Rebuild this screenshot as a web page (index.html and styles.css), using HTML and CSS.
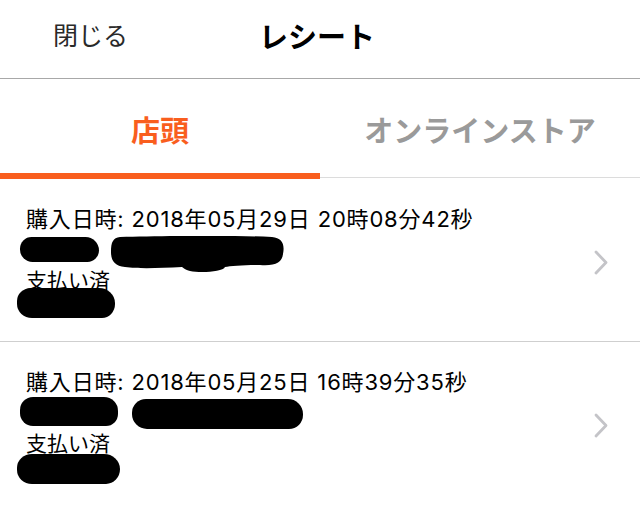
FILE: index.html
```html
<!DOCTYPE html>
<html lang="ja">
<head>
<meta charset="utf-8">
<title>レシート</title>
<link rel="stylesheet" href="styles.css">
</head>
<body>
<div class="app">
  <header class="nav">
    <div class="nav-left"><span class="close">閉じる</span></div>
    <h1 class="title">レシート</h1>
    <div class="nav-right"></div>
  </header>
  <nav class="tabs">
    <div class="tab active">店頭</div>
    <div class="tab">オンラインストア</div>
  </nav>
  <ul class="list">
    <li class="row row-1">
      <div class="content">
        <div class="line text">購入日時: 2018年05月29日 20時08分42秒</div>
        <div class="line blobs b2">
          <span class="blob r1a"></span>
          <svg class="r1b" width="175" height="37" viewBox="0 0 175 37"><path d="M10 1 C50 0 120 -1 162 1 C172 2 175 8 173 18 C172 27 165 30 150 29 C135 29 120 30 115 31 C113 36 90 37 80 35 C75 34 74 32 72 31 C50 32 30 33 15 31 C5 30 1 25 1 16 C1 6 3 2 10 1 Z" fill="#000"/></svg>
        </div>
        <div class="line text short">支払い済</div>
        <div class="line blobs b4">
          <span class="blob r1c"></span>
        </div>
      </div>
      <svg class="chev" width="14" height="25" viewBox="0 0 14 25"><polyline points="2,2 12,12.5 2,23" fill="none" stroke="#c4c4c8" stroke-width="2.8" stroke-linecap="round" stroke-linejoin="round"/></svg>
    </li>
    <li class="row row-2">
      <div class="content">
        <div class="line text">購入日時: 2018年05月25日 16時39分35秒</div>
        <div class="line blobs b2">
          <span class="blob r2a"></span>
          <span class="blob r2b"></span>
        </div>
        <div class="line text short">支払い済</div>
        <div class="line blobs b4">
          <span class="blob r2c"></span>
        </div>
      </div>
      <svg class="chev" width="14" height="25" viewBox="0 0 14 25"><polyline points="2,2 12,12.5 2,23" fill="none" stroke="#c4c4c8" stroke-width="2.8" stroke-linecap="round" stroke-linejoin="round"/></svg>
    </li>
  </ul>
</div>
</body>
</html>
```
FILE: styles.css
```css
html, body {
  margin: 0;
  padding: 0;
  background: #fff;
}
body {
  font-family: "Noto Sans CJK JP", "Noto Sans", sans-serif;
  color: #000;
}
.app {
  width: 640px;
  height: 506px;
  overflow: hidden;
}
.nav {
  height: 78px;
  border-bottom: 1px solid #a8a8a8;
  display: grid;
  grid-template-columns: 1fr auto 1fr;
  align-items: center;
}
.nav-left {
  padding-left: 53px;
}
.close {
  font-size: 25px;
  line-height: 30px;
  color: #2a2a2a;
  display: block;
  margin-top: -11px;
}
.title {
  margin: -9px 0 0 -6px;
  font-size: 29px;
  line-height: 34px;
  font-weight: 700;
  color: #000;
}
.tabs {
  display: flex;
  height: 100px;
}
.tab {
  flex: 1;
  text-align: center;
  font-size: 29px;
  line-height: 30px;
  font-weight: 700;
  color: #9a9a9a;
  padding-top: 35px;
  box-sizing: border-box;
  border-bottom: 1px solid #dcdcdc;
  margin-bottom: 1px;
}
.tab.active {
  color: #f95e1e;
  border-bottom: 6px solid #f95e1e;
  margin-bottom: 0;
}
.list {
  list-style: none;
  margin: 0;
  padding: 0;
}
.row {
  display: flex;
  align-items: center;
  border-bottom: 1px solid #cfcfcf;
  padding: 25px 32px 20px 17px;
}
.row:last-child {
  border-bottom: none;
  padding-bottom: 40px;
}
.content {
  flex: 1;
  display: flex;
  flex-direction: column;
}
.line.text {
  font-family: Inter, "Noto Sans CJK JP", sans-serif;
  font-size: 22px;
  line-height: 30px;
  letter-spacing: 0.82px;
  padding-left: 9px;
  white-space: nowrap;
}
.line.text.short {
  font-family: "Noto Sans CJK JP", sans-serif;
  font-size: 21px;
  line-height: 24px;
  letter-spacing: 0;
}
.blobs {
  display: flex;
  align-items: flex-start;
}
.b2 {
  height: 33px;
}
.b4 {
  height: 30px;
}
.blob {
  display: block;
  background: #000;
}
.r1a {
  width: 79px;
  height: 25px;
  margin: 3px 0 0 3px;
  border-radius: 12px 14px 12px 13px;
}
.r1b {
  margin: 2px 0 0 11px;
  display: block;
}
.row-1 .b4 .blob {
  margin-top: -3px;
}
.r1c {
  width: 98px;
  height: 30px;
  border-radius: 14px 16px 13px 15px / 13px 15px 14px 14px;
}
.r2a {
  width: 98px;
  height: 29px;
  margin: 0 0 0 3px;
  border-radius: 13px 14px 12px 13px;
}
.r2b {
  width: 171px;
  height: 30px;
  margin: 2px 0 0 14px;
  border-radius: 14px 15px 14px 15px;
}
.r2c {
  width: 103px;
  height: 30px;
  border-radius: 15px 16px 14px 15px / 14px 15px 15px 14px;
}
.chev {
  display: block;
  flex: none;
}
```
